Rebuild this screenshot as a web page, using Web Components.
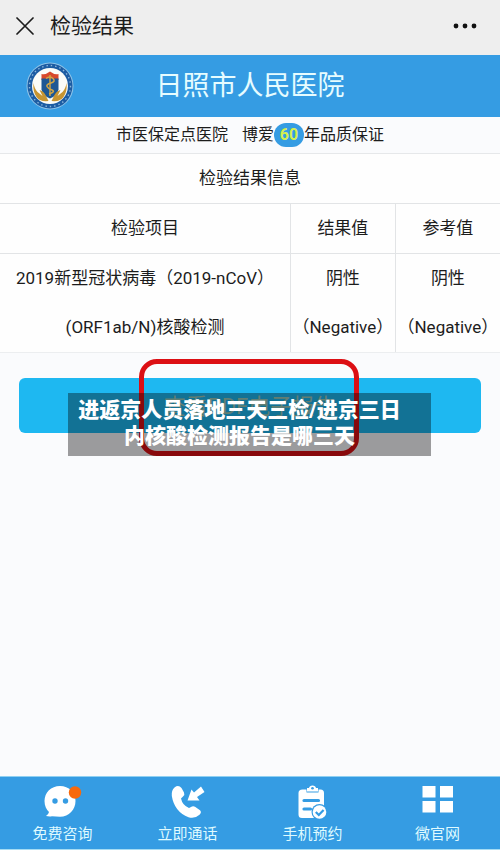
<!DOCTYPE html>
<html lang="zh-CN">
<head>
<meta charset="utf-8">
<meta name="viewport" content="width=device-width, initial-scale=1">
<title>检验结果</title>
<style>
    body {
        margin: 0;
        font-family: Roboto, "Noto Sans CJK SC", sans-serif;
        color: #1c1c1c;
        background-color: #fafbfd;
    }
</style>
</head>
<body>
<result-page></result-page>

<script>
class TitleBar extends HTMLElement {

    constructor() {
        super();
        this.shadowDOM = this.attachShadow({mode: "open"});
    }

    connectedCallback() {
        this.render();
    }

    render() {
        this.shadowDOM.innerHTML = `
        <style>
            :host {
                display: flex;
                align-items: center;
                box-sizing: border-box;
                height: 55px;
                padding: 0 23px 4px 16px;
                background-color: #eeeeee;
            }
            button {
                display: flex;
                padding: 0;
                border: 0;
                background: none;
                cursor: pointer;
            }
            h1 {
                flex: 1;
                margin: 0 0 0 16px;
                font-size: 21px;
                line-height: 30px;
                font-weight: 400;
            }
        </style>
        <button aria-label="关闭">
            <svg width="18" height="18" viewBox="0 0 18 18" stroke="#1c1c1c" stroke-width="1.7" stroke-linecap="round"><path d="M1 1l16 16M17 1L1 17"/></svg>
        </button>
        <h1><slot></slot></h1>
        <button aria-label="更多">
            <svg width="24" height="6" viewBox="0 0 24 6" fill="#111"><circle cx="3" cy="3" r="2.4"/><circle cx="12" cy="3" r="2.4"/><circle cx="21" cy="3" r="2.4"/></svg>
        </button>`;
    }
}

class HospitalHeader extends HTMLElement {

    constructor() {
        super();
        this.shadowDOM = this.attachShadow({mode: "open"});
    }

    connectedCallback() {
        this.render();
    }

    render() {
        this.shadowDOM.innerHTML = `
        <style>
            :host {
                display: grid;
                grid-template-columns: 48px 1fr 48px;
                align-items: center;
                height: 62px;
                padding: 0 26px;
                background-color: #359ce3;
            }
            svg {
                display: block;
            }
            h2 {
                margin: 0;
                font-size: 27px;
                line-height: 40px;
                font-weight: 400;
                text-align: center;
                color: #e6fcff;
            }
        </style>
        <svg width="48" height="48" viewBox="0 0 48 48">
            <circle cx="24" cy="24" r="23.5" fill="#8fc4e8"/>
            <circle cx="24" cy="24" r="22.5" fill="#1c5ca3"/>
            <circle cx="24" cy="24" r="20.5" fill="none" stroke="#8db7da" stroke-width="1.4" stroke-dasharray="1.4 3"/>
            <circle cx="24" cy="24" r="18" fill="#fbfcf8"/>
            <path d="M15.500 12q4 1 8.500-2.500q4.500 3.500 8.500 2.500v6h-17z" fill="#d8492b"/>
            <path d="M15.500 16.500h17v11q-1 6-8.500 9q-7.500-3-8.500-9z" fill="#1d5794"/>
            <path d="M24 13v21" stroke="#d1a545" stroke-width="1.400"/>
            <path d="M20 16.500q4-3 7 0t-2 4.500t-4 3.500t5 3.500t-3 4" fill="none" stroke="#d1a545" stroke-width="1.500"/>
            <path d="M7.500 21q1 6 4 9l5 4-3-6q4 1 6 5l3 6q-9 1-12-4q-4-6-3-14zM40.500 21q-1 6-4 9l-5 4 3-6q-4 1-6 5l-3 6q9 1 12-4q4-6 3-14z" fill="#c79532"/>
        </svg>
        <h2><slot></slot></h2>`;
    }
}

class HospitalSlogan extends HTMLElement {

    constructor() {
        super();
        this.shadowDOM = this.attachShadow({mode: "open"});
    }

    connectedCallback() {
        this.render();
    }

    render() {
        this.shadowDOM.innerHTML = `
        <style>
            :host {
                display: flex;
                justify-content: center;
                align-items: center;
                height: 36px;
                font-size: 16px;
                line-height: 24px;
            }
            .promise {
                display: flex;
                align-items: center;
                margin-left: 14px;
            }
            b {
                width: 30px;
                border-radius: 12px;
                text-align: center;
                font-weight: 700;
                color: #d5f04e;
                background-color: #359ce3;
            }
        </style>
        <span>市医保定点医院</span>
        <span class="promise">博爱<b>60</b>年品质保证</span>`;
    }
}

class ResultTable extends HTMLElement {

    constructor() {
        super();
        this.shadowDOM = this.attachShadow({mode: "open"});
    }

    connectedCallback() {
        this.render();
    }

    render() {
        this.shadowDOM.innerHTML = `
        <style>
            :host {
                display: block;
                border-top: 1px solid #e6e8ea;
                border-bottom: 1px solid #eceef0;
                background-color: #fefefe;
            }
            table {
                width: 100%;
                table-layout: fixed;
                border-collapse: collapse;
                font-size: 17px;
                line-height: 49px;
                text-align: center;
            }
            th,
            td {
                padding: 0;
                font-weight: 400;
                white-space: nowrap;
                border-left: 1px solid #e2e4e6;
            }
            th {
                border-top: 1px solid #e2e4e6;
                border-bottom: 1px solid #e2e4e6;
            }
            th:first-child,
            td:first-child {
                width: 58%;
                border-left: 0;
            }
        </style>
        <table>
            <caption>检验结果信息</caption>
            <thead>
                <tr><th>检验项目</th><th>结果值</th><th>参考值</th></tr>
            </thead>
            <tbody>
                <tr>
                    <td>2019新型冠状病毒（2019-nCoV）<br>(ORF1ab/N)核酸检测</td>
                    <td>阴性<br>（Negative）</td>
                    <td>阴性<br>（Negative）</td>
                </tr>
            </tbody>
        </table>`;
    }
}

class ReportAction extends HTMLElement {

    constructor() {
        super();
        this.shadowDOM = this.attachShadow({mode: "open"});
    }

    connectedCallback() {
        this.render();
    }

    render() {
        this.shadowDOM.innerHTML = `
        <style>
            :host {
                display: block;
                position: relative;
                padding: 25px 19px;
            }
            button {
                display: block;
                width: 100%;
                height: 55px;
                padding: 0 0 4px;
                border: 0;
                border-radius: 6px;
                font-family: inherit;
                font-size: 22px;
                color: #9fcbb9;
                background-color: #1eb8f1;
                cursor: pointer;
            }
            /* red frame round the button's label */
            .mark {
                position: absolute;
                top: 6px;
                left: 50%;
                box-sizing: border-box;
                width: 220px;
                height: 97px;
                margin-left: -111px;
                border: 5px solid #dc0f14;
                border-radius: 18px;
                pointer-events: none;
            }
            .headline {
                position: absolute;
                top: 40px;
                left: 50%;
                box-sizing: border-box;
                width: 363px;
                margin: 0 0 0 -182px;
                padding: 4px 28px 7px 8px;
                font-size: 21px;
                line-height: 26px;
                font-weight: 900;
                text-align: center;
                white-space: nowrap;
                color: #fff;
                background-color: rgba(0, 0, 0, 0.38);
            }
        </style>
        <button>查看PDF电子报告</button>
        <div class="mark"></div>
        <p class="headline"><slot></slot></p>`;
    }
}

class TabItem extends HTMLElement {

    constructor() {
        super();
        this.shadowDOM = this.attachShadow({mode: "open"});
    }

    connectedCallback() {
        this.render();
    }

    render() {
        this.shadowDOM.innerHTML = `
        <style>
            :host {
                display: block;
                flex: 1;
            }
            a {
                display: flex;
                flex-direction: column;
                align-items: center;
                gap: 3px;
                font-size: 15px;
                line-height: 22px;
                text-decoration: none;
                color: #dffaff;
            }
        </style>
        <a href="#${this.getAttribute("target")}">
            <slot name="icon"></slot>
            <slot></slot>
        </a>`;
    }
}

class TabBar extends HTMLElement {

    constructor() {
        super();
        this.shadowDOM = this.attachShadow({mode: "open"});
    }

    connectedCallback() {
        this.render();
    }

    render() {
        this.shadowDOM.innerHTML = `
        <style>
            :host {
                display: block;
                border-top: 1px solid #8fd0f2;
                border-bottom: 1px solid #a5dcf3;
                background-color: #359ce3;
            }
            nav {
                display: flex;
                padding: 7px 0 4px;
            }
            svg {
                display: block;
            }
        </style>
        <nav>
            <tab-item target="chat">
                <svg slot="icon" width="40" height="36" viewBox="0 0 40 36">
                    <path d="M17 2C8 2 1.500 8.500 1.500 17c0 5 2 8.500 4.500 11q-.5 2.500-3 4q3 .8 6 .3q4 .4 8 .4c9 0 15.500-7 15.500-15.700C32.500 8.500 26 2 17 2z" fill="#fff"/>
                    <circle cx="12" cy="17" r="2.700" fill="#359ce3"/><circle cx="22.500" cy="17" r="2.700" fill="#359ce3"/>
                    <circle cx="32" cy="8.500" r="6.200" fill="#f7690c"/>
                </svg>
                免费咨询
            </tab-item>
            <tab-item target="call">
                <svg slot="icon" width="34" height="36" viewBox="0 0 34 36" fill="#fff">
                    <path d="M3.500 3.500q4-3 7 .5l2.500 4.500q1 2-1 4l-2 2q1.500 7 8 9.500l3-1.500q1.500-.8 3 .2l5 3.500q2 2-.5 4.500q-5 4.500-11 2.500Q3.500 28 .8 12Q.3 6 3.500 3.500z"/>
                    <path d="M16.500 16.500l4-11 2.500 3 7-6 3.500 5.500-7.500 5 2.500 3.500z"/>
                </svg>
                立即通话
            </tab-item>
            <tab-item target="book">
                <svg slot="icon" width="30" height="36" viewBox="0 0 30 36">
                    <path d="M4.500 5.500h4v3h12v-3h2q3.500 0 3.500 3.500v22q0 3-3 3H4q-3.500 0-3.500-3.500V9q0-3.500 4-3.500z" fill="#fff"/>
                    <path d="M9 4h2q.5-2.500 3.500-2.500t3.500 2.500h2v3.500H9z" fill="#fff"/>
                    <circle cx="14.500" cy="4.300" r="1.300" fill="#359ce3"/>
                    <path d="M6 16.500h14.500M6 25h6.500" stroke="#359ce3" stroke-width="3.200" stroke-linecap="round"/>
                    <circle cx="21.500" cy="28" r="8" fill="#359ce3"/>
                    <circle cx="21.500" cy="28" r="6.800" fill="#fff"/>
                    <path d="M17.800 28l3 3 4.800-5" fill="none" stroke="#359ce3" stroke-width="2.200"/>
                </svg>
                手机预约
            </tab-item>
            <tab-item target="site">
                <svg slot="icon" width="32" height="36" viewBox="0 0 32 36" fill="#fff">
                    <path d="M.5 2h13v11.500H.5zM18 2h13v11.500H18zM.5 17h13v11.500H.5zM18 17h13v11.500H18z"/>
                </svg>
                微官网
            </tab-item>
        </nav>`;
    }
}

class ResultPage extends HTMLElement {

    constructor() {
        super();
        this.shadowDOM = this.attachShadow({mode: "open"});
    }

    connectedCallback() {
        this.render();
    }

    render() {
        this.shadowDOM.innerHTML = `
        <style>
            :host {
                display: flex;
                flex-direction: column;
                min-height: 100vh;
            }
            main {
                flex: 1;
            }
        </style>
        <title-bar>检验结果</title-bar>
        <hospital-header>日照市人民医院</hospital-header>
        <main>
            <hospital-slogan></hospital-slogan>
            <result-table></result-table>
            <report-action>进返京人员落地三天三检/进京三日<br>内核酸检测报告是哪三天</report-action>
        </main>
        <tab-bar></tab-bar>`;
    }
}

customElements.define("title-bar", TitleBar);
customElements.define("hospital-header", HospitalHeader);
customElements.define("hospital-slogan", HospitalSlogan);
customElements.define("result-table", ResultTable);
customElements.define("report-action", ReportAction);
customElements.define("tab-item", TabItem);
customElements.define("tab-bar", TabBar);
customElements.define("result-page", ResultPage);
</script>
</body>
</html>
